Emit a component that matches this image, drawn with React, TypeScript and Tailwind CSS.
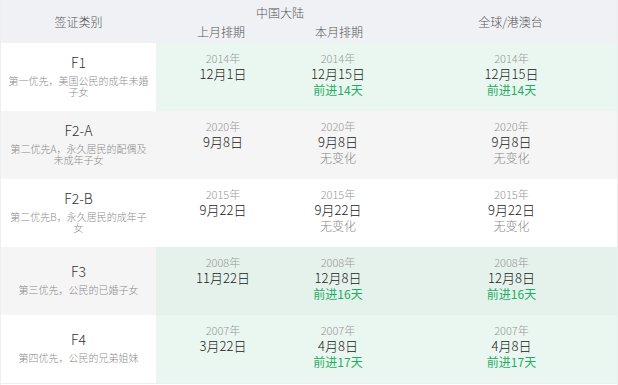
import React from 'react';

type Cell = { year: string; date: string; change?: string };
type Row = { code: string; desc: string; last: Cell; cur: Cell; global: Cell; up: boolean };

const rows: Row[] = [
  {
    code: 'F1',
    desc: '第一优先，美国公民的成年未婚子女',
    last: { year: '2014年', date: '12月1日' },
    cur: { year: '2014年', date: '12月15日', change: '前进14天' },
    global: { year: '2014年', date: '12月15日', change: '前进14天' },
    up: true,
  },
  {
    code: 'F2-A',
    desc: '第二优先A，永久居民的配偶及未成年子女',
    last: { year: '2020年', date: '9月8日' },
    cur: { year: '2020年', date: '9月8日', change: '无变化' },
    global: { year: '2020年', date: '9月8日', change: '无变化' },
    up: false,
  },
  {
    code: 'F2-B',
    desc: '第二优先B，永久居民的成年子女',
    last: { year: '2015年', date: '9月22日' },
    cur: { year: '2015年', date: '9月22日', change: '无变化' },
    global: { year: '2015年', date: '9月22日', change: '无变化' },
    up: false,
  },
  {
    code: 'F3',
    desc: '第三优先，公民的已婚子女',
    last: { year: '2008年', date: '11月22日' },
    cur: { year: '2008年', date: '12月8日', change: '前进16天' },
    global: { year: '2008年', date: '12月8日', change: '前进16天' },
    up: true,
  },
  {
    code: 'F4',
    desc: '第四优先，公民的兄弟姐妹',
    last: { year: '2007年', date: '3月22日' },
    cur: { year: '2007年', date: '4月8日', change: '前进17天' },
    global: { year: '2007年', date: '4月8日', change: '前进17天' },
    up: true,
  },
];

const DateCell: React.FC<{ cell: Cell; up: boolean; className?: string }> = ({ cell, up, className = '' }) => (
  <div className={`flex flex-col items-center pt-[7px] ${className}`}>
    <span className="text-[11px] leading-[16px] text-[#999]">{cell.year}</span>
    <span className="text-[13px] leading-[16px] text-[#222]">{cell.date}</span>
    {cell.change && (
      <span className={`text-[12px] leading-[16px] ${up ? 'text-[#1fad66] font-normal' : 'text-[#888]'}`}>
        {cell.change}
      </span>
    )}
  </div>
);

export default function App() {
  return (
    <div
      className="w-[618px] h-[385px] bg-white border-x border-[#ebeef2] overflow-hidden font-light"
      style={{ fontFamily: '"Noto Sans CJK SC", "Noto Sans", sans-serif' }}
    >
      {/* Header */}
      <div className="flex h-[43px] bg-[#eff1f5] text-[12px] text-[#555]">
        <div className="w-[155px] flex items-center justify-center">签证类别</div>
        <div className="w-[248px] flex flex-col">
          <div className="h-[20px] flex items-end justify-center leading-[14px]">中国大陆</div>
          <div className="flex flex-1 items-center">
            <div className="w-[130px] text-center">上月排期</div>
            <div className="w-[118px] text-center pr-[12px]">本月排期</div>
          </div>
        </div>
        <div className="flex-1 flex items-center justify-center">全球/港澳台</div>
      </div>

      {/* Body */}
      {rows.map((r, i) => {
        const striped = i % 2 === 1;
        const leftBg = striped ? 'bg-[#f5f5f5]' : 'bg-white';
        const dataBg = r.up ? (striped ? 'bg-[#e4f2eb]' : 'bg-[#eaf7f0]') : leftBg;
        return (
          <div key={r.code} className="flex h-[68px]">
            <div className={`w-[155px] flex flex-col items-center justify-center px-[6px] pb-[6px] text-center ${leftBg}`}>
              <span className="text-[14px] leading-[20px] text-[#333]">{r.code}</span>
              <span className="mt-[3px] text-[10px] leading-[11px] text-[#8c8c8c]">{r.desc}</span>
            </div>
            <div className={`flex-1 grid grid-cols-[134px_96px_1fr] ${dataBg}`}>
              <DateCell cell={r.last} up={r.up} />
              <DateCell cell={r.cur} up={r.up} />
              <DateCell cell={r.global} up={r.up} className="pl-[20px]" />
            </div>
          </div>
        );
      })}
      <div className="h-px bg-[#ebeef2]" />
    </div>
  );
}
